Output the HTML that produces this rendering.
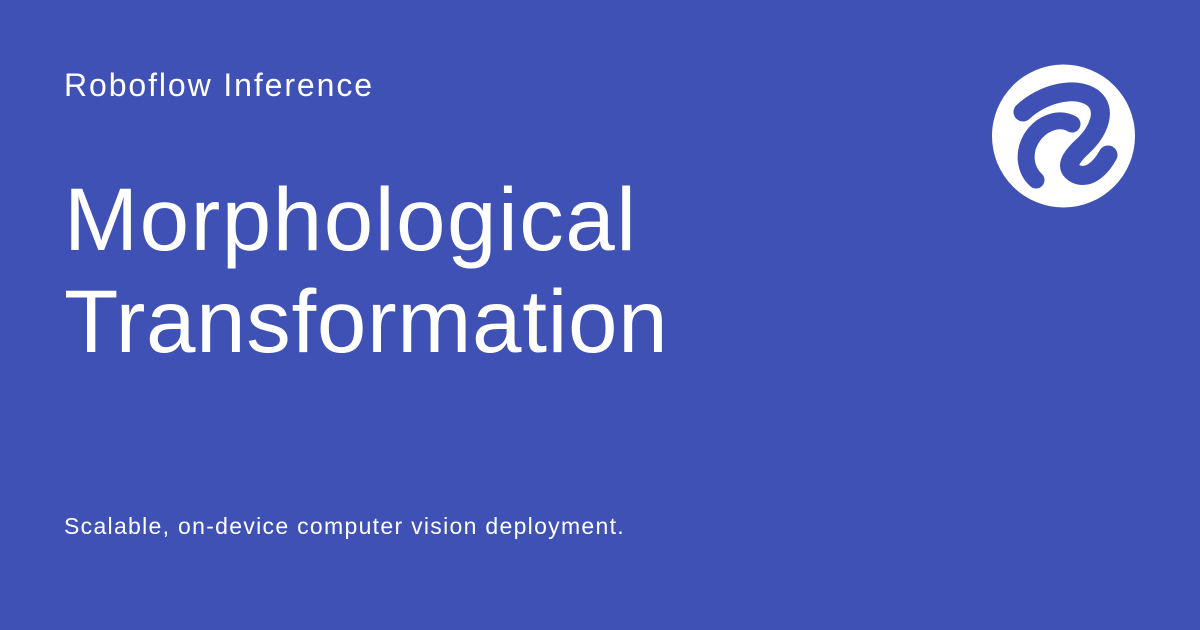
<!DOCTYPE html>
<html><head><style>
body{margin:0;width:1200px;height:630px;background:#3f51b5;position:relative;overflow:hidden;font-family:"Liberation Sans",sans-serif;color:#fff}
.t{position:absolute;left:64px;white-space:nowrap}
</style></head><body>
<div class="t" style="top:67px;font-size:32px;letter-spacing:1.9px">Roboflow Inference</div>
<div class="t" style="top:168px;font-size:89px;line-height:102px;letter-spacing:1.5px">Morphological<br><span style="letter-spacing:0.65px">Transformation</span></div>
<div class="t" style="top:513px;font-size:23px;letter-spacing:1.3px">Scalable, on-device computer vision deployment.</div>
<svg style="position:absolute;left:0;top:0" width="1200" height="630">
<circle cx="1063.5" cy="136" r="71.5" fill="#fff"/>
<g fill="none" stroke="#3f51b5" stroke-linecap="round">
<path stroke-width="19" d="M1023,112 C1042,94 1075,85 1093,98 C1108,110 1098,132 1083,146 C1070,158 1064,168 1076,174 C1090,180 1102,166 1108,155"/>
<path stroke-width="17" d="M1072,124 C1058,116 1040,124 1031,139 C1023,153 1025,170 1036,180"/>
</g>
</svg>
</body></html>
